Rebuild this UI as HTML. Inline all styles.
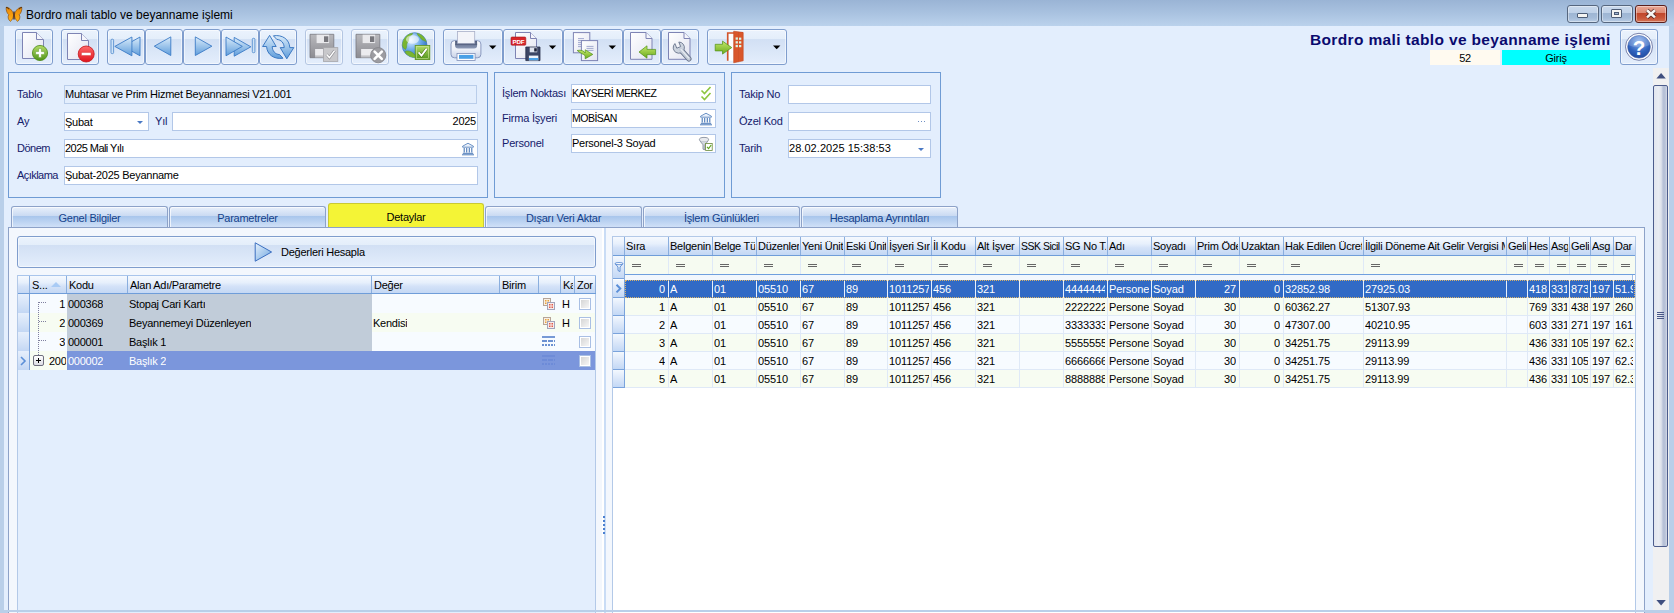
<!DOCTYPE html><html lang="tr"><head><meta charset="utf-8"><title>Bordro mali tablo ve beyanname işlemi</title><style>
*{box-sizing:border-box;margin:0;padding:0}
html,body{width:1674px;height:613px;overflow:hidden}
body{position:relative;background:#b9cfe9;font-family:"Liberation Sans",sans-serif;font-size:11px;letter-spacing:-.25px;color:#000;line-height:1}
.abs,.abs *{position:absolute}
.abs{position:absolute}
.t{position:absolute;white-space:nowrap;line-height:13px;height:13px}
#titlebar{left:0;top:0;width:1674px;height:26px;background:linear-gradient(#9ab4d5,#a9c2e0 50%,#bbd2ec)}
#content{left:4px;top:26px;width:1665px;height:584px;background:#e3eefd;overflow:hidden}
.tb{position:absolute;top:29px;height:36px;border:1px solid #7f9dcd;border-radius:3px;background:linear-gradient(#ebf3fd 0,#e4eefa 27%,#d2e0f4 28%,#dbe7f8 65%,#e4eefc 100%);box-shadow:inset 0 0 0 1px rgba(255,255,255,.55)}
.tb.dis{border-color:#b4c6e2}
.tb svg{position:absolute;left:0;top:0}
.panel{position:absolute;border:1px solid #6f9bd4;background:#e3eefd}
.lbl{position:absolute;white-space:nowrap;color:#15206b;line-height:13px;letter-spacing:-.2px}
.inp{position:absolute;height:19px;border:1px solid #b2c7e8;background:#fff;white-space:nowrap;overflow:hidden}
.inp span{position:absolute;left:0;top:2px;line-height:13px}
.inp.ro{background:#e3eefd;border-color:#b9cdea}
.tab{position:absolute;top:206px;height:21px;width:157px;border:1px solid #8da2c8;border-bottom:none;border-radius:3px 3px 0 0;background:linear-gradient(#e9f0fb 0,#c9daf2 45%,#a9c6ec 47%,#cfe0f7 100%);color:#15428b;text-align:center;line-height:22px;box-shadow:inset 1px 1px 0 rgba(255,255,255,.7)}
.tab.act{top:203px;height:24px;background:#f4f436;border-color:#c9c934;color:#000;line-height:27px;box-shadow:none}
.hdr{position:absolute;background:linear-gradient(#f6f9fe 0,#e7f0fc 38%,#d4e2f8 60%,#c4d8f4 100%);border-right:1px solid #8aaede;white-space:nowrap;overflow:hidden}
.hdr span{position:absolute;left:3px;line-height:13px}
.uc{font-style:normal;font-size:10.5px;letter-spacing:-.5px;position:static!important}
.cell{position:absolute;white-space:nowrap;overflow:hidden;line-height:13px}
</style></head><body>
<div id="titlebar" class="abs">
<svg style="position:absolute;left:5px;top:6px" width="18" height="17" viewBox="0 0 18 17"><defs><linearGradient id="gBf" x1="0" y1="0" x2="0" y2="1"><stop offset="0" stop-color="#e8870a"/><stop offset=".6" stop-color="#f8a010"/><stop offset="1" stop-color="#ffb21c"/></linearGradient></defs><path d="M8.500 8.200C7.200 3.600 3.600 1 1.200 1.300C.9 4.400 2 7.400 3.800 8.700C2.500 10.400 3 13.800 5.400 15.400C7.200 14.200 8.200 11.800 8.500 9.800Z" fill="url(#gBf)" stroke="#7a4208" stroke-width=".6"/><path d="M9.500 8.200C10.800 3.600 14.400 1 16.800 1.300C17.100 4.400 16 7.400 14.200 8.700C15.500 10.400 15 13.800 12.600 15.400C10.800 14.200 9.800 11.800 9.500 9.800Z" fill="url(#gBf)" stroke="#7a4208" stroke-width=".6"/><path d="M1.200 1.300C2.400 1.600 3.400 2.400 4.200 3.400M16.800 1.300C15.600 1.600 14.600 2.400 13.800 3.400" stroke="#4a2a08" stroke-width="1" fill="none"/><rect x="8.300" y="5.200" width="1.400" height="8.600" rx=".7" fill="#4e2a12"/></svg>
<div class="t" style="left:26px;top:8px;font-size:12px;line-height:15px;height:15px;letter-spacing:0">Bordro mali tablo ve beyanname işlemi</div>
<div class="abs" style="left:1567px;top:5px;width:32px;height:18px;border:1px solid #56677f;border-radius:3px;background:linear-gradient(#c9d9ec 0,#bfd1e8 42%,#9db5d3 44%,#a5bcd9 75%,#b9cde5 100%);box-shadow:inset 0 0 0 1px rgba(255,255,255,.4)"><div style="left:9px;top:7px;width:11px;height:5px;background:#f4f4f2;border:1px solid #4d5c75;border-radius:1px"></div></div>
<div class="abs" style="left:1601px;top:5px;width:32px;height:18px;border:1px solid #56677f;border-radius:3px;background:linear-gradient(#c9d9ec 0,#bfd1e8 42%,#9db5d3 44%,#a5bcd9 75%,#b9cde5 100%);box-shadow:inset 0 0 0 1px rgba(255,255,255,.4)"><div style="left:9px;top:3px;width:11px;height:9px;background:#f4f4f2;border:1px solid #4d5c75;border-radius:1px"></div><div style="left:12px;top:6px;width:5px;height:3px;background:#9fb4d2;border:1px solid #4d5c75"></div></div>
<div class="abs" style="left:1635px;top:5px;width:32px;height:18px;border:1px solid #5a1f1c;border-radius:3px;background:linear-gradient(#eaa795 0,#dd8a74 42%,#c0452a 44%,#c9573a 75%,#d67456 100%);box-shadow:inset 0 0 0 1px rgba(255,255,255,.4)"><svg style="left:0;top:0" width="30" height="16" viewBox="0 0 30 16"><path d="M11 4.200l8 7.200M19 4.200l-8 7.200" stroke="#5a2a25" stroke-width="4.200"/><path d="M11 4.200l8 7.200M19 4.200l-8 7.200" stroke="#f6f6f4" stroke-width="2.600"/></svg></div>
</div>
<div id="content" class="abs"></div>
<div class="tb" style="left:15px;width:38px"></div>
<div class="tb" style="left:61px;width:38px"></div>
<div class="tb" style="left:107px;width:38px"></div>
<div class="tb" style="left:145px;width:38px"></div>
<div class="tb" style="left:183px;width:38px"></div>
<div class="tb" style="left:221px;width:38px"></div>
<div class="tb" style="left:259px;width:38px"></div>
<div class="tb dis" style="left:305px;width:38px"></div>
<div class="tb dis" style="left:351px;width:38px"></div>
<div class="tb" style="left:397px;width:38px"></div>
<div class="tb" style="left:443px;width:60px"></div>
<div class="tb" style="left:503px;width:60px"></div>
<div class="tb" style="left:563px;width:60px"></div>
<div class="tb" style="left:623px;width:38px"></div>
<div class="tb" style="left:661px;width:38px"></div>
<div class="tb" style="left:707px;width:80px"></div>
<div class="tb" style="left:1620px;width:38px"></div>
<svg class="abs" style="left:0;top:26px" width="1674" height="44" viewBox="0 26 1674 44"><defs>
<linearGradient id="gPage" x1="0" y1="0" x2="1" y2="1"><stop offset="0" stop-color="#ffffff"/><stop offset="1" stop-color="#e2e4f1"/></linearGradient>
<linearGradient id="gBlue" x1="0" y1="0" x2="0" y2="1"><stop offset="0" stop-color="#d9ebfa"/><stop offset="1" stop-color="#5f9ddb"/></linearGradient>
<linearGradient id="gGreen" x1="0" y1="0" x2="0" y2="1"><stop offset="0" stop-color="#b5dc68"/><stop offset="1" stop-color="#4f9418"/></linearGradient>
<linearGradient id="gRed" x1="0" y1="0" x2="0" y2="1"><stop offset="0" stop-color="#ff6a6a"/><stop offset="1" stop-color="#e0121c"/></linearGradient>
<linearGradient id="gGray" x1="0" y1="0" x2="0" y2="1"><stop offset="0" stop-color="#b9b9bd"/><stop offset="1" stop-color="#8c8c92"/></linearGradient>
<linearGradient id="gArr" x1="0" y1="0" x2="0" y2="1"><stop offset="0" stop-color="#c4e86a"/><stop offset="1" stop-color="#6aaa1c"/></linearGradient>
<radialGradient id="gGlobe" cx=".35" cy=".3" r=".8"><stop offset="0" stop-color="#e8f4ff"/><stop offset=".5" stop-color="#6aa9e8"/><stop offset="1" stop-color="#1f5fb8"/></radialGradient>
<radialGradient id="gHelp" cx=".5" cy=".25" r=".9"><stop offset="0" stop-color="#8fb4ee"/><stop offset=".55" stop-color="#2f62bd"/><stop offset="1" stop-color="#1a3f8f"/></radialGradient>
<linearGradient id="gPr" x1="0" y1="0" x2="0" y2="1"><stop offset="0" stop-color="#fafbfe"/><stop offset=".5" stop-color="#eef1f9"/><stop offset="1" stop-color="#c9d3e8"/></linearGradient><linearGradient id="gPrB" x1="0" y1="0" x2="0" y2="1"><stop offset="0" stop-color="#4f5b79"/><stop offset="1" stop-color="#8e9bb8"/></linearGradient>
</defs><path d="M22.5 32.5H36.5L43.5 39.5V58.5H22.5Z" fill="url(#gPage)" stroke="#7e84b4" stroke-width="1"/><path d="M36.5 32.5V39.5H43.5" fill="#f4f5fb" stroke="#7e84b4" stroke-width="1"/><circle cx="40" cy="53" r="7.6" fill="url(#gGreen)" stroke="#4b8a18" stroke-width=".8"/><path d="M38.6 48.6h2.8v3h3v2.8h-3v3h-2.8v-3h-3v-2.8h3z" fill="#fff" stroke="#5b9a22" stroke-width=".5"/><path d="M67.5 33.5H81.5L88.5 40.5V59.5H67.5Z" fill="url(#gPage)" stroke="#7e84b4" stroke-width="1"/><path d="M81.5 33.5V40.5H88.5" fill="#f4f5fb" stroke="#7e84b4" stroke-width="1"/><circle cx="86.2" cy="54" r="8" fill="url(#gRed)" stroke="#c4161c" stroke-width=".8"/><rect x="81.4" y="52.4" width="9.6" height="3.2" rx=".6" fill="#fff" stroke="#d43a3a" stroke-width=".5"/><rect x="111" y="39.2" width="2.6" height="14.4" rx="1" fill="#cfe3f7" stroke="#4a86cc" stroke-width=".8"/><path d="M123.3 46.4L140.0 37.0V55.8Z" fill="url(#gBlue)" stroke="#3b7ac6" stroke-width=".9" stroke-linejoin="round"/><path d="M114.8 46.4L131.9 37.0V55.8Z" fill="url(#gBlue)" stroke="#3b7ac6" stroke-width=".9" stroke-linejoin="round"/><path d="M154.3 46.2L170.8 36.9V55.5Z" fill="url(#gBlue)" stroke="#3b7ac6" stroke-width=".9" stroke-linejoin="round"/><path d="M211.9 46.2L195.3 36.9V55.5Z" fill="url(#gBlue)" stroke="#3b7ac6" stroke-width=".9" stroke-linejoin="round"/><path d="M250.9 46.8L234.2 37.4V56.2Z" fill="url(#gBlue)" stroke="#3b7ac6" stroke-width=".9" stroke-linejoin="round"/><path d="M242.3 46.4L226.0 37.0V55.8Z" fill="url(#gBlue)" stroke="#3b7ac6" stroke-width=".9" stroke-linejoin="round"/><rect x="252.3" y="38.3" width="2.6" height="14.4" rx="1" fill="#cfe3f7" stroke="#4a86cc" stroke-width=".8"/><g fill="url(#gBlue)" stroke="#2f6fbd" stroke-width=".9" stroke-linejoin="round"><path d="M262.6 46.5 L269.6 35.4 L276.2 46.5 H272.2 C272.4 51 275 54.2 279.6 54.6 L283 58.2 C274 59.6 267 54.6 266.6 46.5Z"/><path d="M293.8 47.6 L286.8 58.8 L280.2 47.6 H284.2 C284 43 281.4 39.8 276.8 39.4 L273.4 35.8 C282.4 34.4 289.4 39.4 289.8 47.6Z"/></g><path d="M310.0 34.3H333.8V57.7H310.0Z" fill="url(#gGray)" stroke="#77777d" stroke-width=".8"/><rect x="316.6" y="34.7" width="12.5" height="8.4" fill="#e9e9ec"/><rect x="324.0" y="36.3" width="4.3" height="5.7" fill="#77777d"/><rect x="315.1" y="49.0" width="15.7" height="8.4" fill="#ececef"/><rect x="315.1" y="55.4" width="15.7" height="2.1" fill="#77777d" opacity=".35"/><rect x="323.400" y="47.600" width="14.400" height="13.800" fill="#c8c8cb" stroke="#a6a6aa" stroke-width=".8"/><path d="M326.600 54.400l2.800 3.200 5.200-7" fill="none" stroke="#8e8e93" stroke-width="2.600"/><path d="M326.600 54.400l2.800 3.200 5.200-7" fill="none" stroke="#fff" stroke-width="1.500"/><path d="M356.0 34.3H379.8V57.7H356.0Z" fill="url(#gGray)" stroke="#77777d" stroke-width=".8"/><rect x="362.6" y="34.7" width="12.5" height="8.4" fill="#e9e9ec"/><rect x="370.0" y="36.3" width="4.3" height="5.7" fill="#77777d"/><rect x="361.1" y="49.0" width="15.7" height="8.4" fill="#ececef"/><rect x="361.1" y="55.4" width="15.7" height="2.1" fill="#77777d" opacity=".35"/><circle cx="378.2" cy="55.2" r="7.6" fill="#9c9ca1" stroke="#818187" stroke-width=".8"/><path d="M374.6 51.6l7.2 7.2M381.8 51.6l-7.2 7.2" stroke="#fff" stroke-width="2.6" stroke-linecap="round"/><clipPath id="cpG"><circle cx="414.600" cy="45.100" r="12.300"/></clipPath><circle cx="414.600" cy="45.100" r="12.400" fill="url(#gGlobe)" stroke="#4a7fc4" stroke-width=".8"/><g clip-path="url(#cpG)" fill="#79b530" stroke="#5f9a22" stroke-width=".5"><path d="M401 40C402.500 36 407 32.500 412 32C413.500 33.500 411.500 35.500 409.500 36.500C408 38 409.500 40.500 407.500 42.500C406 44.500 407.500 47 405.500 49.500C402.500 48 400.500 43 401 40Z"/><path d="M417.500 32C422 32 427 36 428.500 42C426 42.500 424.500 40 422.500 40C420.500 39 420.500 37 418.500 36C417.500 34.500 416.500 33 417.500 32Z"/><path d="M405 51.500C408 50 411.500 51.500 413.500 53.500C415 55.500 418 56.500 417 58.500C411 59.500 406 56 405 51.500Z"/></g><ellipse cx="412.500" cy="39.500" rx="6.500" ry="4.200" fill="#fff" opacity=".55"/><rect x="415.200" y="45.400" width="14.600" height="14.200" fill="url(#gGreen)" stroke="#5f9420" stroke-width=".8"/><rect x="416.500" y="46.700" width="12" height="11.600" fill="none" stroke="#cfe89a" stroke-width=".6"/><path d="M418.600 52.400l2.900 3.200 5.200-7" fill="none" stroke="#4d7a16" stroke-width="3"/><path d="M418.600 52.400l2.900 3.200 5.200-7" fill="none" stroke="#fff" stroke-width="1.800"/><rect x="451" y="40.600" width="29.900" height="17.200" rx="3.500" fill="url(#gPr)" stroke="#7f8fb8" stroke-width=".9"/><path d="M455.100 41h22v4.500a3 3 0 0 1-3 3h-16a3 3 0 0 1-3-3z" fill="url(#gPrB)"/><rect x="457.500" y="31.400" width="17.200" height="12.400" fill="#f3f4f9" stroke="#a9afc8" stroke-width=".8"/><path d="M455.100 44.200h22" stroke="#4f5b79" stroke-width="1"/><rect x="457" y="53.400" width="18.100" height="7" fill="#fdfdff" stroke="#7f8fb8" stroke-width=".8"/><rect x="459" y="54.900" width="14.400" height="3.900" fill="#4aa0e6"/><path d="M489.0 45.4H496.4L492.7 49.2Z" fill="#000"/><path d="M515.5 32.5H530.5L536.5 38.5V58.5H515.5Z" fill="url(#gPage)" stroke="#7e84b4" stroke-width="1"/><path d="M530.5 32.5V38.5H536.5" fill="#f4f5fb" stroke="#7e84b4" stroke-width="1"/><rect x="511" y="37" width="14.800" height="8.200" rx="1" fill="#d8262c" stroke="#a3151a" stroke-width=".6"/><text x="518.400" y="43.700" font-family="Liberation Sans,sans-serif" font-weight="bold" font-size="6.200" fill="#fff" text-anchor="middle">PDF</text><path d="M525.8 47.0H540.0V60.6H525.8Z" fill="#3c4564" stroke="#2a314c" stroke-width=".8"/><rect x="529.7" y="47.4" width="7.5" height="4.9" fill="#dfe3ee"/><rect x="534.2" y="48.2" width="2.6" height="3.3" fill="#1d2238"/><rect x="528.9" y="55.6" width="9.4" height="4.9" fill="#eef3fb"/><rect x="528.9" y="59.2" width="9.4" height="1.2" fill="#2a314c" opacity=".35"/><rect x="529" y="58" width="9.200" height="2.200" fill="#4aa0e6"/><path d="M548.9 45.4H556.2L552.5 49.2Z" fill="#000"/><rect x="573.400" y="32.600" width="16.400" height="20.200" fill="url(#gPage)" stroke="#7e84b4"/><path d="M578 38.600h6M578 40.600h6M578 42.600h6M578 44.600h6M578 46.600h3" stroke="#8d97c4" stroke-width=".8"/><rect x="581.400" y="40.600" width="16.200" height="20" fill="url(#gPage)" stroke="#7e84b4"/><path d="M586.500 46.400h7M586.500 48.400h7M586.500 50.400h7" stroke="#8d97c4" stroke-width=".8"/><path d="M577.200 50.500c4-1 7 .5 8 2.500v-3.200l7.600 4.600-7.600 4.400v-3c-2-2-5-2.400-8-5.300z" fill="url(#gArr)" stroke="#4f8f14" stroke-width=".7" stroke-linejoin="round"/><path d="M608.6 45.4H616.0L612.3 49.2Z" fill="#000"/><path d="M630.5 32.5H646.0L652.0 38.5V59.3H630.5Z" fill="url(#gPage)" stroke="#7e84b4" stroke-width="1"/><path d="M646.0 32.5V38.5H652.0" fill="#f4f5fb" stroke="#7e84b4" stroke-width="1"/><path d="M639 52l8-6.200v3.600h8.600v5.200h-8.600v3.600z" fill="url(#gArr)" stroke="#4f8f14" stroke-width=".7" stroke-linejoin="round"/><path d="M668.5 32.5H684.0L690.0 38.5V59.3H668.5Z" fill="url(#gPage)" stroke="#7e84b4" stroke-width="1"/><path d="M684.0 32.5V38.5H690.0" fill="#f4f5fb" stroke="#7e84b4" stroke-width="1"/><path d="M681.500 50.600L688.800 58.800" stroke="#66728a" stroke-width="5.400" stroke-linecap="round"/><path d="M678.80 42.00A5.6 5.6 0 1 1 674.91 43.57L676.78 48.20L680.67 46.63Z" fill="#cdd4df" stroke="#66728a" stroke-width=".9" stroke-linejoin="round"/><path d="M680.500 49.500L688.800 58.800" stroke="#c3cbd8" stroke-width="3.600" stroke-linecap="round"/><path d="M681 49.300L688.600 57.800" stroke="#e9edf3" stroke-width="1.200" stroke-linecap="round"/><path d="M727.700 60.800V33h15.300" fill="none" stroke="#d4552a" stroke-width="1.600"/><path d="M729 34h4.700v26.800H729z" fill="#fdfdfd"/><path d="M733.700 31.200L743.200 32.500V60.800L733.700 62.800Z" fill="#d9562a" stroke="#c2461f" stroke-width=".6" stroke-linejoin="round"/><path d="M738.500 31.900V62" stroke="#c94e26" stroke-width=".5"/><g fill="#d9f5e6"><rect x="735.600" y="37.400" width="2.300" height="2.300"/><rect x="739" y="37.600" width="2.300" height="2.200"/><rect x="735.600" y="41.200" width="2.300" height="2.300"/><rect x="739" y="41.300" width="2.300" height="2.200"/><rect x="735.600" y="44.900" width="2.300" height="2.300"/><rect x="739" y="45" width="2.300" height="2.200"/></g><path d="M715.200 44.300h7.300v-3.200l9.300 6.500-9.300 6.500v-3.200h-7.300z" fill="url(#gArr)" stroke="#4f8f14" stroke-width=".7" stroke-linejoin="round"/><path d="M773.0 45.4H780.4L776.7 49.2Z" fill="#000"/><circle cx="1639" cy="46.800" r="13.500" fill="#fbfcfe" stroke="#5a6496" stroke-width=".8"/><circle cx="1639" cy="46.800" r="11.300" fill="url(#gHelp)" stroke="#3a5aa6" stroke-width=".6"/><path d="M1628.200 45a10.800 10.800 0 0 1 21.600 0a16 9 0 0 1-21.600 0z" fill="#fff" opacity=".18"/><text x="1639" y="54.600" font-family="Liberation Sans,sans-serif" font-weight="bold" font-size="20.500" fill="#fff" text-anchor="middle">?</text></svg>
<div class="t" style="left:1310px;top:31px;width:300px;text-align:right;font-weight:bold;font-size:15.5px;letter-spacing:.35px;line-height:18px;height:18px;color:#0a0a6e" id="heading">Bordro mali tablo ve beyanname işlemi</div>
<div class="abs" style="left:1430px;top:50px;width:70px;height:15px;background:#fffaf0;text-align:center;line-height:17px" id="b52">52</div>
<div class="abs" style="left:1502px;top:50px;width:108px;height:15px;background:#00ffff;text-align:center;line-height:17px">Giriş</div>
<div class="panel" style="left:8px;top:72px;width:480px;height:126px"></div>
<div class="panel" style="left:494px;top:72px;width:231px;height:126px"></div>
<div class="panel" style="left:731px;top:72px;width:210px;height:126px"></div>
<div class="lbl" style="left:17px;top:88px">Tablo</div>
<div class="inp ro" style="left:64px;top:85px;width:413px"><span>Muhtasar ve Prim Hizmet Beyannamesi V21.001</span></div>
<div class="lbl" style="left:17px;top:115px">Ay</div>
<div class="inp " style="left:64px;top:112px;width:85px"><span><i style="font-style:normal;position:relative;top:1px">Şubat</i></span><svg style="position:absolute;left:72px;top:8px" width="6" height="3"><path d="M0 0h6l-3 3z" fill="#4a79c4"/></svg></div>
<div class="lbl" style="left:155px;top:115px">Yıl</div>
<div class="inp " style="left:172px;top:112px;width:306px"><span style="left:auto;right:1px">2025</span></div>
<div class="lbl" style="left:17px;top:142px"><i style="font-style:normal;letter-spacing:-.5px">Dönem</i></div>
<div class="inp " style="left:64px;top:139px;width:414px"><span><i style="font-style:normal;letter-spacing:-.55px">2025 Mali Yılı</i></span><svg style="position:absolute;right:2px;top:2px" width="14" height="14" viewBox="0 0 14 14"><path d="M7 1.200L1.600 4.200v1h10.800v-1z" fill="#e9f0fa" stroke="#4a79b8" stroke-width=".8" stroke-linejoin="round"/><path d="M3.200 6v4.600M5.700 6v4.600M8.300 6v4.600M10.800 6v4.600" stroke="#4a79b8" stroke-width="1.100"/><path d="M1.800 11.300h10.400M1 12.800h12" stroke="#4a79b8" stroke-width="1"/></svg></div>
<div class="lbl" style="left:17px;top:169px"><i style="font-style:normal;letter-spacing:-.55px">Açıklama</i></div>
<div class="inp " style="left:64px;top:166px;width:414px"><span>Şubat-2025 Beyanname</span></div>
<div class="lbl" style="left:502px;top:87px">İşlem Noktası</div>
<div class="inp " style="left:571px;top:84px;width:145px"><span><i class="uc">KAYSERİ MERKEZ</i></span><svg style="position:absolute;right:2px;top:1px" width="14" height="16" viewBox="0 0 14 16"><path d="M2.500 4.500l3 3 6-6.500" fill="none" stroke="#8cc63f" stroke-width="1.600"/><path d="M2.500 10.500l3 3 6-6.500" fill="none" stroke="#8cc63f" stroke-width="1.600"/></svg></div>
<div class="lbl" style="left:502px;top:112px">Firma İşyeri</div>
<div class="inp " style="left:571px;top:109px;width:145px"><span><i class="uc">MOBİSAN</i></span><svg style="position:absolute;right:2px;top:2px" width="14" height="14" viewBox="0 0 14 14"><path d="M7 1.200L1.600 4.200v1h10.800v-1z" fill="#e9f0fa" stroke="#4a79b8" stroke-width=".8" stroke-linejoin="round"/><path d="M3.200 6v4.600M5.700 6v4.600M8.300 6v4.600M10.800 6v4.600" stroke="#4a79b8" stroke-width="1.100"/><path d="M1.800 11.300h10.400M1 12.800h12" stroke="#4a79b8" stroke-width="1"/></svg></div>
<div class="lbl" style="left:502px;top:137px">Personel</div>
<div class="inp " style="left:571px;top:134px;width:145px"><span>Personel-3 Soyad</span><svg style="position:absolute;right:2px;top:1px" width="15" height="16" viewBox="0 0 15 16"><ellipse cx="6" cy="3.600" rx="4.600" ry="2.200" fill="#e8eaee" stroke="#7b8494" stroke-width=".8"/><path d="M2.200 5.200l2.800 3.600v4.400l2 .6v-5l2.800-3.600" fill="#d4d8df" stroke="#7b8494" stroke-width=".8"/><rect x="7.600" y="7.400" width="6.600" height="7" fill="#fff" stroke="#6a8a3a" stroke-width=".8"/><path d="M9 10.800l1.600 1.800 2.600-3.600" fill="none" stroke="#5fa61e" stroke-width="1.200"/></svg></div>
<div class="lbl" style="left:739px;top:88px">Takip No</div>
<div class="inp " style="left:788px;top:85px;width:143px"></div>
<div class="lbl" style="left:739px;top:115px">Özel Kod</div>
<div class="inp " style="left:788px;top:112px;width:143px"><div style="position:absolute;right:5px;top:8px;width:7px;height:1px;background:repeating-linear-gradient(90deg,#6f8fc4 0 1px,transparent 1px 3px)"></div></div>
<div class="lbl" style="left:739px;top:142px">Tarih</div>
<div class="inp " style="left:788px;top:139px;width:143px"><span><i style="font-style:normal;letter-spacing:.05px">28.02.2025 15:38:53</i></span><svg style="position:absolute;right:6px;top:8px" width="6" height="3"><path d="M0 0h6l-3 3z" fill="#4a79c4"/></svg></div>
<div class="abs" style="left:1653px;top:68px;width:16px;height:542px;background:#f0f0f1"></div>
<svg class="abs" style="left:1653px;top:68px" width="16" height="542"><path d="M3.400 10.400h9.400l-4.700-5.400z" fill="#3f4f7f"/><path d="M3.400 532h9.400l-4.700 5.400z" fill="#3f4f7f"/></svg>
<div class="abs" style="left:1653px;top:85px;width:15px;height:462px;border:1px solid #4c5c8c;border-radius:2px;background:linear-gradient(90deg,#e2e6ef 0,#e9ecf3 35%,#dfe3ec 55%,#b7c1d7 70%,#b7c1d7 85%,#d5dbe8 100%)"></div>
<div class="abs" style="left:1657px;top:312px;width:7px;height:7px;background:repeating-linear-gradient(#4a5888 0 1px,transparent 1px 2px)"></div>
<div class="abs" style="left:8px;top:227px;width:1637px;height:390px;background:#f3f7fd;border:1px solid #8da2c8"></div>
<div class="tab" style="left:11px">Genel Bilgiler</div>
<div class="tab" style="left:169px">Parametreler</div>
<div class="tab act" style="left:328px;width:156px">Detaylar</div>
<div class="tab" style="left:485px">Dışarı Veri Aktar</div>
<div class="tab" style="left:643px">İşlem Günlükleri</div>
<div class="tab" style="left:801px">Hesaplama Ayrıntıları</div>
<div class="abs" style="left:17px;top:236px;width:579px;height:32px;border:1px solid #7f9dcd;border-radius:3px;background:linear-gradient(#ebf3fd 0,#e4eefa 27%,#d2e0f4 28%,#dbe7f8 65%,#e4eefc 100%);box-shadow:inset 0 0 0 1px rgba(255,255,255,.55)"></div>
<svg class="abs" style="left:254px;top:242px" width="20" height="20" viewBox="0 0 20 20"><defs><linearGradient id="gPl" x1="0" y1="0" x2="1" y2="1"><stop offset="0" stop-color="#e6f1fc"/><stop offset="1" stop-color="#6ea6e0"/></linearGradient></defs><path d="M1.200 .800L17.600 10L1.200 19.200Z" fill="url(#gPl)" stroke="#3b6fc0" stroke-width="1" stroke-linejoin="round"/></svg>
<div class="t" style="left:281px;top:246px" id="dh">Değerleri Hesapla</div>
<div class="abs" style="left:17px;top:275px;width:579px;height:340px;background:#e3eefd;border:1px solid #b3c9e8"></div>
<div class="abs" style="left:18px;top:275px;width:578px;height:19px;border-bottom:1px solid #6f9dd9;border-top:1px solid #a9c5ec;overflow:hidden">
<div class="hdr" style="left:0px;top:0;width:12px;height:17px"><span style="top:3px;left:2px;width:8px;overflow:hidden"></span></div>
<div class="hdr" style="left:12px;top:0;width:37px;height:17px"><span style="top:3px;left:2px;width:33px;overflow:hidden">S...</span></div>
<div class="hdr" style="left:49px;top:0;width:61px;height:17px"><span style="top:3px;left:2px;width:57px;overflow:hidden">Kodu</span></div>
<div class="hdr" style="left:110px;top:0;width:244px;height:17px"><span style="top:3px;left:2px;width:240px;overflow:hidden">Alan Adı/Parametre</span></div>
<div class="hdr" style="left:354px;top:0;width:128px;height:17px"><span style="top:3px;left:2px;width:124px;overflow:hidden">Değer</span></div>
<div class="hdr" style="left:482px;top:0;width:39px;height:17px"><span style="top:3px;left:2px;width:35px;overflow:hidden">Birim</span></div>
<div class="hdr" style="left:521px;top:0;width:22px;height:17px"><span style="top:3px;left:2px;width:18px;overflow:hidden"></span></div>
<div class="hdr" style="left:543px;top:0;width:14px;height:17px"><span style="top:3px;left:2px;width:10px;overflow:hidden">Ka</span></div>
<div class="hdr" style="left:557px;top:0;width:21px;height:17px"><span style="top:3px;left:2px;width:17px;overflow:hidden">Zor</span></div>
<svg style="position:absolute;left:33px;top:6px" width="10" height="5"><path d="M0 5L5 0L10 5Z" fill="#a9cbf5"/></svg>
</div>
<div class="abs" style="left:18px;top:294px;width:11px;height:19px;background:linear-gradient(#e6effc,#d6e4f8 50%,#c3d7f4)"></div>
<div class="abs" style="left:29px;top:294px;width:1px;height:19px;background:#7aa3dc"></div>
<div class="abs" style="left:30px;top:294px;width:37px;height:19px;background:#f7fbff"></div>
<div class="abs" style="left:67px;top:294px;width:305px;height:19px;background:#c1ccd9"></div>
<div class="abs" style="left:372px;top:294px;width:223px;height:19px;background:#f7fbff"></div>
<div class="cell" style="left:30px;top:298px;width:35px;text-align:right">1</div>
<div class="cell" style="left:68px;top:298px;color:#000">000368</div>
<div class="cell" style="left:129px;top:298px;color:#000">Stopaj Cari Kartı</div>
<svg style="position:absolute;left:543px;top:298px" width="12" height="12" viewBox="0 0 12 12"><rect x=".500" y=".500" width="7" height="7" fill="#f8efe4" stroke="#b5a498" stroke-width="1"/><rect x="4.500" y="4.500" width="7" height="7" fill="#f7ecea" stroke="#a3a3bb" stroke-width="1"/><path d="M2 2h1.500v1.500H2zM4.500 2H6v1.500H4.500zM2 4.500h1.500V6H2z" fill="#e8a23c"/><path d="M6 6h1.500v1.500H6zM8.500 6H10v1.500H8.500zM6 8.500h1.500V10H6zM8.500 8.500H10V10H8.500z" fill="#e0584a"/></svg>
<div class="cell" style="left:562px;top:298px">H</div>
<div class="abs" style="left:579px;top:298px;width:12px;height:12px;border:1px solid #a9bfe4;background:#fff"><div style="position:absolute;left:1px;top:1px;width:8px;height:8px;background:linear-gradient(135deg,#d6d6d6,#f6f6f6)"></div></div>
<div class="abs" style="left:18px;top:313px;width:11px;height:19px;background:linear-gradient(#e6effc,#d6e4f8 50%,#c3d7f4)"></div>
<div class="abs" style="left:29px;top:313px;width:1px;height:19px;background:#7aa3dc"></div>
<div class="abs" style="left:30px;top:313px;width:37px;height:19px;background:#f7fcf2"></div>
<div class="abs" style="left:67px;top:313px;width:305px;height:19px;background:#c1ccd9"></div>
<div class="abs" style="left:372px;top:313px;width:223px;height:19px;background:#f7fcf2"></div>
<div class="cell" style="left:30px;top:317px;width:35px;text-align:right">2</div>
<div class="cell" style="left:68px;top:317px;color:#000">000369</div>
<div class="cell" style="left:129px;top:317px;color:#000">Beyannemeyi Düzenleyen</div>
<div class="cell" style="left:373px;top:317px">Kendisi</div>
<svg style="position:absolute;left:543px;top:317px" width="12" height="12" viewBox="0 0 12 12"><rect x=".500" y=".500" width="7" height="7" fill="#f8efe4" stroke="#b5a498" stroke-width="1"/><rect x="4.500" y="4.500" width="7" height="7" fill="#f7ecea" stroke="#a3a3bb" stroke-width="1"/><path d="M2 2h1.500v1.500H2zM4.500 2H6v1.500H4.500zM2 4.500h1.500V6H2z" fill="#e8a23c"/><path d="M6 6h1.500v1.500H6zM8.500 6H10v1.500H8.500zM6 8.500h1.500V10H6zM8.500 8.500H10V10H8.500z" fill="#e0584a"/></svg>
<div class="cell" style="left:562px;top:317px">H</div>
<div class="abs" style="left:579px;top:317px;width:12px;height:12px;border:1px solid #a9bfe4;background:#fff"><div style="position:absolute;left:1px;top:1px;width:8px;height:8px;background:linear-gradient(135deg,#d6d6d6,#f6f6f6)"></div></div>
<div class="abs" style="left:18px;top:332px;width:11px;height:19px;background:linear-gradient(#e6effc,#d6e4f8 50%,#c3d7f4)"></div>
<div class="abs" style="left:29px;top:332px;width:1px;height:19px;background:#7aa3dc"></div>
<div class="abs" style="left:30px;top:332px;width:37px;height:19px;background:#f7fbff"></div>
<div class="abs" style="left:67px;top:332px;width:305px;height:19px;background:#c1ccd9"></div>
<div class="abs" style="left:372px;top:332px;width:223px;height:19px;background:#f7fbff"></div>
<div class="cell" style="left:30px;top:336px;width:35px;text-align:right">3</div>
<div class="cell" style="left:68px;top:336px;color:#000">000001</div>
<div class="cell" style="left:129px;top:336px;color:#000">Başlık 1</div>
<svg style="position:absolute;left:542px;top:336px" width="13" height="10" viewBox="0 0 13 10"><path d="M0 1h13" stroke="#3f6fc4" stroke-width="1.400"/><path d="M0 5h13" stroke="#3f6fc4" stroke-width="1.400" stroke-dasharray="5 1"/><path d="M0 9h13" stroke="#3f6fc4" stroke-width="1.400" stroke-dasharray="2 1"/></svg>
<div class="abs" style="left:579px;top:336px;width:12px;height:12px;border:1px solid #a9bfe4;background:#fff"><div style="position:absolute;left:1px;top:1px;width:8px;height:8px;background:linear-gradient(135deg,#d6d6d6,#f6f6f6)"></div></div>
<div class="abs" style="left:18px;top:351px;width:11px;height:19px;background:linear-gradient(#e6effc,#d6e4f8 50%,#c3d7f4)"></div>
<div class="abs" style="left:29px;top:351px;width:1px;height:19px;background:#7aa3dc"></div>
<div class="abs" style="left:30px;top:351px;width:37px;height:19px;background:#f7fcf2"></div>
<div class="abs" style="left:67px;top:351px;width:528px;height:19px;background:#7b96dc"></div>
<div class="cell" style="left:49px;top:355px;width:17px">200</div>
<div class="cell" style="left:68px;top:355px;color:#fff">000002</div>
<div class="cell" style="left:129px;top:355px;color:#fff">Başlık 2</div>
<svg style="position:absolute;left:542px;top:355px" width="13" height="10" viewBox="0 0 13 10"><path d="M0 1h13" stroke="#6a88d6" stroke-width="1.400"/><path d="M0 5h13" stroke="#6a88d6" stroke-width="1.400" stroke-dasharray="5 1"/><path d="M0 9h13" stroke="#6a88d6" stroke-width="1.400" stroke-dasharray="2 1"/></svg>
<div class="abs" style="left:579px;top:355px;width:12px;height:12px;border:1px solid #a9bfe4;background:#fff"><div style="position:absolute;left:1px;top:1px;width:8px;height:8px;background:linear-gradient(135deg,#d6d6d6,#f6f6f6)"></div></div>
<svg class="abs" style="left:30px;top:294px" width="40" height="76"><g stroke="#7f7f9f" stroke-width="1" stroke-dasharray="1 1"><path d="M8.500 8v58"/><path d="M9 8.500h8"/><path d="M9 27.500h8"/><path d="M9 46.500h8"/></g></svg>
<div class="abs" style="left:33px;top:355px;width:11px;height:11px;border:1px solid #6f6f7f;border-radius:2px;background:linear-gradient(#fff,#dcdce4)"><div style="position:absolute;left:2px;top:4px;width:5px;height:1px;background:#000"></div><div style="position:absolute;left:4px;top:2px;width:1px;height:5px;background:#000"></div></div>
<svg class="abs" style="left:20px;top:356px" width="7" height="10"><path d="M1 1l4 4-4 4" fill="none" stroke="#5b8fd8" stroke-width="1.600"/></svg>
<div class="abs" style="left:602px;top:228px;width:4px;height:385px;background:linear-gradient(90deg,#fff 0,#fff 62%,#c9dcf5 62%)"></div>
<div class="abs" style="left:603px;top:516px;width:2px;height:19px;background:repeating-linear-gradient(#4a7fd0 0 2px,transparent 2px 4px)"></div>
<div class="abs" style="left:612px;top:236px;width:1024px;height:380px;background:#fff;border:1px solid #b3c9e8"></div>
<div class="abs" style="left:613px;top:237px;width:1022px;height:19px;border-bottom:1px solid #6f9dd9;overflow:hidden">
<div class="hdr" style="left:0px;top:0;width:12px;height:18px"><span style="top:3px;left:1px;width:9px;overflow:hidden"></span></div>
<div class="hdr" style="left:12px;top:0;width:44px;height:18px"><span style="top:3px;left:1px;width:41px;overflow:hidden">Sıra</span></div>
<div class="hdr" style="left:56px;top:0;width:44px;height:18px"><span style="top:3px;left:1px;width:41px;overflow:hidden">Belgenin</span></div>
<div class="hdr" style="left:100px;top:0;width:44px;height:18px"><span style="top:3px;left:1px;width:41px;overflow:hidden">Belge Tü</span></div>
<div class="hdr" style="left:144px;top:0;width:44px;height:18px"><span style="top:3px;left:1px;width:41px;overflow:hidden">Düzenler</span></div>
<div class="hdr" style="left:188px;top:0;width:44px;height:18px"><span style="top:3px;left:1px;width:41px;overflow:hidden">Yeni Ünit</span></div>
<div class="hdr" style="left:232px;top:0;width:43px;height:18px"><span style="top:3px;left:1px;width:40px;overflow:hidden">Eski Ünit</span></div>
<div class="hdr" style="left:275px;top:0;width:44px;height:18px"><span style="top:3px;left:1px;width:41px;overflow:hidden">İşyeri Sır</span></div>
<div class="hdr" style="left:319px;top:0;width:44px;height:18px"><span style="top:3px;left:1px;width:41px;overflow:hidden">İl Kodu</span></div>
<div class="hdr" style="left:363px;top:0;width:44px;height:18px"><span style="top:3px;left:1px;width:41px;overflow:hidden">Alt İşver</span></div>
<div class="hdr" style="left:407px;top:0;width:44px;height:18px"><span style="top:3px;left:1px;width:41px;overflow:hidden"><i class="uc">SSK Sicil</i></span></div>
<div class="hdr" style="left:451px;top:0;width:44px;height:18px"><span style="top:3px;left:1px;width:41px;overflow:hidden">SG No T.</span></div>
<div class="hdr" style="left:495px;top:0;width:44px;height:18px"><span style="top:3px;left:1px;width:41px;overflow:hidden">Adı</span></div>
<div class="hdr" style="left:539px;top:0;width:44px;height:18px"><span style="top:3px;left:1px;width:41px;overflow:hidden">Soyadı</span></div>
<div class="hdr" style="left:583px;top:0;width:44px;height:18px"><span style="top:3px;left:1px;width:41px;overflow:hidden">Prim Öde</span></div>
<div class="hdr" style="left:627px;top:0;width:44px;height:18px"><span style="top:3px;left:1px;width:41px;overflow:hidden">Uzaktan</span></div>
<div class="hdr" style="left:671px;top:0;width:80px;height:18px"><span style="top:3px;left:1px;width:77px;overflow:hidden">Hak Edilen Ücret</span></div>
<div class="hdr" style="left:751px;top:0;width:143px;height:18px"><span style="top:3px;left:1px;width:140px;overflow:hidden">İlgili Döneme Ait Gelir Vergisi M</span></div>
<div class="hdr" style="left:894px;top:0;width:21px;height:18px"><span style="top:3px;left:1px;width:18px;overflow:hidden">Geli</span></div>
<div class="hdr" style="left:915px;top:0;width:22px;height:18px"><span style="top:3px;left:1px;width:19px;overflow:hidden">Hes</span></div>
<div class="hdr" style="left:937px;top:0;width:20px;height:18px"><span style="top:3px;left:1px;width:17px;overflow:hidden">Asg</span></div>
<div class="hdr" style="left:957px;top:0;width:21px;height:18px"><span style="top:3px;left:1px;width:18px;overflow:hidden">Geli</span></div>
<div class="hdr" style="left:978px;top:0;width:23px;height:18px"><span style="top:3px;left:1px;width:20px;overflow:hidden">Asg</span></div>
<div class="hdr" style="left:1001px;top:0;width:22px;height:18px"><span style="top:3px;left:1px;width:19px;overflow:hidden">Dar</span></div>
</div>
<div class="abs" style="left:625px;top:256px;width:1010px;height:18px;background:#f6fbf1"></div>
<div class="abs" style="left:613px;top:256px;width:11px;height:23px;background:linear-gradient(#f3f8fe,#dbe7f9 50%,#c3d8f5);border-bottom:1px solid #7aa3dc"></div><div class="abs" style="left:624px;top:256px;width:1px;height:24px;background:#8aaede"></div>
<svg class="abs" style="left:614px;top:262px" width="10" height="11" viewBox="0 0 10 11"><path d="M1 1.500h8l-3 3.500v4.500l-2-1v-3.500z" fill="#eaf2fc" stroke="#4f83cf" stroke-width=".9" stroke-linejoin="round"/><ellipse cx="5" cy="1.600" rx="4" ry="1.100" fill="#fff" stroke="#4f83cf" stroke-width=".8"/></svg>
<div class="abs" style="left:632px;top:264px;width:9px;height:1px;background:#666"></div><div class="abs" style="left:632px;top:266px;width:9px;height:1px;background:#666"></div>
<div class="abs" style="left:676px;top:264px;width:9px;height:1px;background:#666"></div><div class="abs" style="left:676px;top:266px;width:9px;height:1px;background:#666"></div>
<div class="abs" style="left:668px;top:256px;width:1px;height:18px;background:#dfe9f7"></div>
<div class="abs" style="left:720px;top:264px;width:9px;height:1px;background:#666"></div><div class="abs" style="left:720px;top:266px;width:9px;height:1px;background:#666"></div>
<div class="abs" style="left:712px;top:256px;width:1px;height:18px;background:#dfe9f7"></div>
<div class="abs" style="left:764px;top:264px;width:9px;height:1px;background:#666"></div><div class="abs" style="left:764px;top:266px;width:9px;height:1px;background:#666"></div>
<div class="abs" style="left:756px;top:256px;width:1px;height:18px;background:#dfe9f7"></div>
<div class="abs" style="left:808px;top:264px;width:9px;height:1px;background:#666"></div><div class="abs" style="left:808px;top:266px;width:9px;height:1px;background:#666"></div>
<div class="abs" style="left:800px;top:256px;width:1px;height:18px;background:#dfe9f7"></div>
<div class="abs" style="left:852px;top:264px;width:9px;height:1px;background:#666"></div><div class="abs" style="left:852px;top:266px;width:9px;height:1px;background:#666"></div>
<div class="abs" style="left:844px;top:256px;width:1px;height:18px;background:#dfe9f7"></div>
<div class="abs" style="left:895px;top:264px;width:9px;height:1px;background:#666"></div><div class="abs" style="left:895px;top:266px;width:9px;height:1px;background:#666"></div>
<div class="abs" style="left:887px;top:256px;width:1px;height:18px;background:#dfe9f7"></div>
<div class="abs" style="left:939px;top:264px;width:9px;height:1px;background:#666"></div><div class="abs" style="left:939px;top:266px;width:9px;height:1px;background:#666"></div>
<div class="abs" style="left:931px;top:256px;width:1px;height:18px;background:#dfe9f7"></div>
<div class="abs" style="left:983px;top:264px;width:9px;height:1px;background:#666"></div><div class="abs" style="left:983px;top:266px;width:9px;height:1px;background:#666"></div>
<div class="abs" style="left:975px;top:256px;width:1px;height:18px;background:#dfe9f7"></div>
<div class="abs" style="left:1027px;top:264px;width:9px;height:1px;background:#666"></div><div class="abs" style="left:1027px;top:266px;width:9px;height:1px;background:#666"></div>
<div class="abs" style="left:1019px;top:256px;width:1px;height:18px;background:#dfe9f7"></div>
<div class="abs" style="left:1071px;top:264px;width:9px;height:1px;background:#666"></div><div class="abs" style="left:1071px;top:266px;width:9px;height:1px;background:#666"></div>
<div class="abs" style="left:1063px;top:256px;width:1px;height:18px;background:#dfe9f7"></div>
<div class="abs" style="left:1115px;top:264px;width:9px;height:1px;background:#666"></div><div class="abs" style="left:1115px;top:266px;width:9px;height:1px;background:#666"></div>
<div class="abs" style="left:1107px;top:256px;width:1px;height:18px;background:#dfe9f7"></div>
<div class="abs" style="left:1159px;top:264px;width:9px;height:1px;background:#666"></div><div class="abs" style="left:1159px;top:266px;width:9px;height:1px;background:#666"></div>
<div class="abs" style="left:1151px;top:256px;width:1px;height:18px;background:#dfe9f7"></div>
<div class="abs" style="left:1203px;top:264px;width:9px;height:1px;background:#666"></div><div class="abs" style="left:1203px;top:266px;width:9px;height:1px;background:#666"></div>
<div class="abs" style="left:1195px;top:256px;width:1px;height:18px;background:#dfe9f7"></div>
<div class="abs" style="left:1247px;top:264px;width:9px;height:1px;background:#666"></div><div class="abs" style="left:1247px;top:266px;width:9px;height:1px;background:#666"></div>
<div class="abs" style="left:1239px;top:256px;width:1px;height:18px;background:#dfe9f7"></div>
<div class="abs" style="left:1291px;top:264px;width:9px;height:1px;background:#666"></div><div class="abs" style="left:1291px;top:266px;width:9px;height:1px;background:#666"></div>
<div class="abs" style="left:1283px;top:256px;width:1px;height:18px;background:#dfe9f7"></div>
<div class="abs" style="left:1371px;top:264px;width:9px;height:1px;background:#666"></div><div class="abs" style="left:1371px;top:266px;width:9px;height:1px;background:#666"></div>
<div class="abs" style="left:1363px;top:256px;width:1px;height:18px;background:#dfe9f7"></div>
<div class="abs" style="left:1514px;top:264px;width:9px;height:1px;background:#666"></div><div class="abs" style="left:1514px;top:266px;width:9px;height:1px;background:#666"></div>
<div class="abs" style="left:1506px;top:256px;width:1px;height:18px;background:#dfe9f7"></div>
<div class="abs" style="left:1535px;top:264px;width:9px;height:1px;background:#666"></div><div class="abs" style="left:1535px;top:266px;width:9px;height:1px;background:#666"></div>
<div class="abs" style="left:1527px;top:256px;width:1px;height:18px;background:#dfe9f7"></div>
<div class="abs" style="left:1557px;top:264px;width:9px;height:1px;background:#666"></div><div class="abs" style="left:1557px;top:266px;width:9px;height:1px;background:#666"></div>
<div class="abs" style="left:1549px;top:256px;width:1px;height:18px;background:#dfe9f7"></div>
<div class="abs" style="left:1577px;top:264px;width:9px;height:1px;background:#666"></div><div class="abs" style="left:1577px;top:266px;width:9px;height:1px;background:#666"></div>
<div class="abs" style="left:1569px;top:256px;width:1px;height:18px;background:#dfe9f7"></div>
<div class="abs" style="left:1598px;top:264px;width:9px;height:1px;background:#666"></div><div class="abs" style="left:1598px;top:266px;width:9px;height:1px;background:#666"></div>
<div class="abs" style="left:1590px;top:256px;width:1px;height:18px;background:#dfe9f7"></div>
<div class="abs" style="left:1621px;top:264px;width:9px;height:1px;background:#666"></div><div class="abs" style="left:1621px;top:266px;width:9px;height:1px;background:#666"></div>
<div class="abs" style="left:1613px;top:256px;width:1px;height:18px;background:#dfe9f7"></div>
<div class="abs" style="left:625px;top:274px;width:1010px;height:1px;background:#6f9fde"></div>
<div class="abs" style="left:625px;top:275px;width:1008px;height:5px;background:#f2f7fd;border-right:1px solid #9fbce6"></div>
<div class="abs" style="left:613px;top:280px;width:11px;height:18px;background:linear-gradient(#f3f8fe,#dbe7f9 50%,#c3d8f5);border-bottom:1px solid #7aa3dc"></div>
<div class="abs" style="left:624px;top:280px;width:1px;height:18px;background:#7aa3dc"></div>
<div class="abs" style="left:625px;top:280px;width:1010px;height:18px;background:#316ac5;border-bottom:1px solid #316ac5"></div>
<div class="cell" style="left:626px;top:283px;width:39px;letter-spacing:-.1px;text-align:right;color:#fff">0</div>
<div class="abs" style="left:668px;top:280px;width:1px;height:18px;background:#e8f0fb"></div>
<div class="cell" style="left:670px;top:283px;width:40px;letter-spacing:-.1px;color:#fff">A</div>
<div class="abs" style="left:712px;top:280px;width:1px;height:18px;background:#e8f0fb"></div>
<div class="cell" style="left:714px;top:283px;width:40px;letter-spacing:-.1px;color:#fff">01</div>
<div class="abs" style="left:756px;top:280px;width:1px;height:18px;background:#e8f0fb"></div>
<div class="cell" style="left:758px;top:283px;width:40px;letter-spacing:-.1px;color:#fff">05510</div>
<div class="abs" style="left:800px;top:280px;width:1px;height:18px;background:#e8f0fb"></div>
<div class="cell" style="left:802px;top:283px;width:40px;letter-spacing:-.1px;color:#fff">67</div>
<div class="abs" style="left:844px;top:280px;width:1px;height:18px;background:#e8f0fb"></div>
<div class="cell" style="left:846px;top:283px;width:39px;letter-spacing:-.1px;color:#fff">89</div>
<div class="abs" style="left:887px;top:280px;width:1px;height:18px;background:#e8f0fb"></div>
<div class="cell" style="left:889px;top:283px;width:40px;letter-spacing:-.1px;color:#fff">1011257</div>
<div class="abs" style="left:931px;top:280px;width:1px;height:18px;background:#e8f0fb"></div>
<div class="cell" style="left:933px;top:283px;width:40px;letter-spacing:-.1px;color:#fff">456</div>
<div class="abs" style="left:975px;top:280px;width:1px;height:18px;background:#e8f0fb"></div>
<div class="cell" style="left:977px;top:283px;width:40px;letter-spacing:-.1px;color:#fff">321</div>
<div class="abs" style="left:1019px;top:280px;width:1px;height:18px;background:#e8f0fb"></div>
<div class="abs" style="left:1063px;top:280px;width:1px;height:18px;background:#e8f0fb"></div>
<div class="cell" style="left:1065px;top:283px;width:40px;letter-spacing:-.1px;color:#fff">4444444</div>
<div class="abs" style="left:1107px;top:280px;width:1px;height:18px;background:#e8f0fb"></div>
<div class="cell" style="left:1109px;top:283px;width:40px;letter-spacing:-.1px;color:#fff">Persone</div>
<div class="abs" style="left:1151px;top:280px;width:1px;height:18px;background:#e8f0fb"></div>
<div class="cell" style="left:1153px;top:283px;width:40px;letter-spacing:-.1px;color:#fff">Soyad</div>
<div class="abs" style="left:1195px;top:280px;width:1px;height:18px;background:#e8f0fb"></div>
<div class="cell" style="left:1197px;top:283px;width:39px;letter-spacing:-.1px;text-align:right;color:#fff">27</div>
<div class="abs" style="left:1239px;top:280px;width:1px;height:18px;background:#e8f0fb"></div>
<div class="cell" style="left:1241px;top:283px;width:39px;letter-spacing:-.1px;text-align:right;color:#fff">0</div>
<div class="abs" style="left:1283px;top:280px;width:1px;height:18px;background:#e8f0fb"></div>
<div class="cell" style="left:1285px;top:283px;width:76px;letter-spacing:-.1px;color:#fff">32852.98</div>
<div class="abs" style="left:1363px;top:280px;width:1px;height:18px;background:#e8f0fb"></div>
<div class="cell" style="left:1365px;top:283px;width:139px;letter-spacing:-.1px;color:#fff">27925.03</div>
<div class="abs" style="left:1506px;top:280px;width:1px;height:18px;background:#e8f0fb"></div>
<div class="abs" style="left:1527px;top:280px;width:1px;height:18px;background:#e8f0fb"></div>
<div class="cell" style="left:1529px;top:283px;width:18px;letter-spacing:-.1px;color:#fff">418</div>
<div class="abs" style="left:1549px;top:280px;width:1px;height:18px;background:#e8f0fb"></div>
<div class="cell" style="left:1551px;top:283px;width:16px;letter-spacing:-.1px;color:#fff">331</div>
<div class="abs" style="left:1569px;top:280px;width:1px;height:18px;background:#e8f0fb"></div>
<div class="cell" style="left:1571px;top:283px;width:17px;letter-spacing:-.1px;color:#fff">873</div>
<div class="abs" style="left:1590px;top:280px;width:1px;height:18px;background:#e8f0fb"></div>
<div class="cell" style="left:1592px;top:283px;width:19px;letter-spacing:-.1px;color:#fff">197</div>
<div class="abs" style="left:1613px;top:280px;width:1px;height:18px;background:#e8f0fb"></div>
<div class="cell" style="left:1615px;top:283px;width:18px;letter-spacing:-.1px;color:#fff">51.9</div>
<div class="abs" style="left:625px;top:280px;width:1010px;height:18px;border:1px dotted #d9b36a"></div>
<div class="abs" style="left:613px;top:298px;width:11px;height:18px;background:linear-gradient(#f3f8fe,#dbe7f9 50%,#c3d8f5);border-bottom:1px solid #7aa3dc"></div>
<div class="abs" style="left:624px;top:298px;width:1px;height:18px;background:#7aa3dc"></div>
<div class="abs" style="left:625px;top:298px;width:1010px;height:18px;background:#f7fcf2;border-bottom:1px solid #dfe9f7"></div>
<div class="cell" style="left:626px;top:301px;width:39px;letter-spacing:-.1px;text-align:right;color:#000">1</div>
<div class="abs" style="left:668px;top:298px;width:1px;height:18px;background:#dfe9f7"></div>
<div class="cell" style="left:670px;top:301px;width:40px;letter-spacing:-.1px;color:#000">A</div>
<div class="abs" style="left:712px;top:298px;width:1px;height:18px;background:#dfe9f7"></div>
<div class="cell" style="left:714px;top:301px;width:40px;letter-spacing:-.1px;color:#000">01</div>
<div class="abs" style="left:756px;top:298px;width:1px;height:18px;background:#dfe9f7"></div>
<div class="cell" style="left:758px;top:301px;width:40px;letter-spacing:-.1px;color:#000">05510</div>
<div class="abs" style="left:800px;top:298px;width:1px;height:18px;background:#dfe9f7"></div>
<div class="cell" style="left:802px;top:301px;width:40px;letter-spacing:-.1px;color:#000">67</div>
<div class="abs" style="left:844px;top:298px;width:1px;height:18px;background:#dfe9f7"></div>
<div class="cell" style="left:846px;top:301px;width:39px;letter-spacing:-.1px;color:#000">89</div>
<div class="abs" style="left:887px;top:298px;width:1px;height:18px;background:#dfe9f7"></div>
<div class="cell" style="left:889px;top:301px;width:40px;letter-spacing:-.1px;color:#000">1011257</div>
<div class="abs" style="left:931px;top:298px;width:1px;height:18px;background:#dfe9f7"></div>
<div class="cell" style="left:933px;top:301px;width:40px;letter-spacing:-.1px;color:#000">456</div>
<div class="abs" style="left:975px;top:298px;width:1px;height:18px;background:#dfe9f7"></div>
<div class="cell" style="left:977px;top:301px;width:40px;letter-spacing:-.1px;color:#000">321</div>
<div class="abs" style="left:1019px;top:298px;width:1px;height:18px;background:#dfe9f7"></div>
<div class="abs" style="left:1063px;top:298px;width:1px;height:18px;background:#dfe9f7"></div>
<div class="cell" style="left:1065px;top:301px;width:40px;letter-spacing:-.1px;color:#000">2222222</div>
<div class="abs" style="left:1107px;top:298px;width:1px;height:18px;background:#dfe9f7"></div>
<div class="cell" style="left:1109px;top:301px;width:40px;letter-spacing:-.1px;color:#000">Persone</div>
<div class="abs" style="left:1151px;top:298px;width:1px;height:18px;background:#dfe9f7"></div>
<div class="cell" style="left:1153px;top:301px;width:40px;letter-spacing:-.1px;color:#000">Soyad</div>
<div class="abs" style="left:1195px;top:298px;width:1px;height:18px;background:#dfe9f7"></div>
<div class="cell" style="left:1197px;top:301px;width:39px;letter-spacing:-.1px;text-align:right;color:#000">30</div>
<div class="abs" style="left:1239px;top:298px;width:1px;height:18px;background:#dfe9f7"></div>
<div class="cell" style="left:1241px;top:301px;width:39px;letter-spacing:-.1px;text-align:right;color:#000">0</div>
<div class="abs" style="left:1283px;top:298px;width:1px;height:18px;background:#dfe9f7"></div>
<div class="cell" style="left:1285px;top:301px;width:76px;letter-spacing:-.1px;color:#000">60362.27</div>
<div class="abs" style="left:1363px;top:298px;width:1px;height:18px;background:#dfe9f7"></div>
<div class="cell" style="left:1365px;top:301px;width:139px;letter-spacing:-.1px;color:#000">51307.93</div>
<div class="abs" style="left:1506px;top:298px;width:1px;height:18px;background:#dfe9f7"></div>
<div class="abs" style="left:1527px;top:298px;width:1px;height:18px;background:#dfe9f7"></div>
<div class="cell" style="left:1529px;top:301px;width:18px;letter-spacing:-.1px;color:#000">769</div>
<div class="abs" style="left:1549px;top:298px;width:1px;height:18px;background:#dfe9f7"></div>
<div class="cell" style="left:1551px;top:301px;width:16px;letter-spacing:-.1px;color:#000">331</div>
<div class="abs" style="left:1569px;top:298px;width:1px;height:18px;background:#dfe9f7"></div>
<div class="cell" style="left:1571px;top:301px;width:17px;letter-spacing:-.1px;color:#000">438</div>
<div class="abs" style="left:1590px;top:298px;width:1px;height:18px;background:#dfe9f7"></div>
<div class="cell" style="left:1592px;top:301px;width:19px;letter-spacing:-.1px;color:#000">197</div>
<div class="abs" style="left:1613px;top:298px;width:1px;height:18px;background:#dfe9f7"></div>
<div class="cell" style="left:1615px;top:301px;width:18px;letter-spacing:-.1px;color:#000">260</div>
<div class="abs" style="left:613px;top:316px;width:11px;height:18px;background:linear-gradient(#f3f8fe,#dbe7f9 50%,#c3d8f5);border-bottom:1px solid #7aa3dc"></div>
<div class="abs" style="left:624px;top:316px;width:1px;height:18px;background:#7aa3dc"></div>
<div class="abs" style="left:625px;top:316px;width:1010px;height:18px;background:#f7fbff;border-bottom:1px solid #dfe9f7"></div>
<div class="cell" style="left:626px;top:319px;width:39px;letter-spacing:-.1px;text-align:right;color:#000">2</div>
<div class="abs" style="left:668px;top:316px;width:1px;height:18px;background:#dfe9f7"></div>
<div class="cell" style="left:670px;top:319px;width:40px;letter-spacing:-.1px;color:#000">A</div>
<div class="abs" style="left:712px;top:316px;width:1px;height:18px;background:#dfe9f7"></div>
<div class="cell" style="left:714px;top:319px;width:40px;letter-spacing:-.1px;color:#000">01</div>
<div class="abs" style="left:756px;top:316px;width:1px;height:18px;background:#dfe9f7"></div>
<div class="cell" style="left:758px;top:319px;width:40px;letter-spacing:-.1px;color:#000">05510</div>
<div class="abs" style="left:800px;top:316px;width:1px;height:18px;background:#dfe9f7"></div>
<div class="cell" style="left:802px;top:319px;width:40px;letter-spacing:-.1px;color:#000">67</div>
<div class="abs" style="left:844px;top:316px;width:1px;height:18px;background:#dfe9f7"></div>
<div class="cell" style="left:846px;top:319px;width:39px;letter-spacing:-.1px;color:#000">89</div>
<div class="abs" style="left:887px;top:316px;width:1px;height:18px;background:#dfe9f7"></div>
<div class="cell" style="left:889px;top:319px;width:40px;letter-spacing:-.1px;color:#000">1011257</div>
<div class="abs" style="left:931px;top:316px;width:1px;height:18px;background:#dfe9f7"></div>
<div class="cell" style="left:933px;top:319px;width:40px;letter-spacing:-.1px;color:#000">456</div>
<div class="abs" style="left:975px;top:316px;width:1px;height:18px;background:#dfe9f7"></div>
<div class="cell" style="left:977px;top:319px;width:40px;letter-spacing:-.1px;color:#000">321</div>
<div class="abs" style="left:1019px;top:316px;width:1px;height:18px;background:#dfe9f7"></div>
<div class="abs" style="left:1063px;top:316px;width:1px;height:18px;background:#dfe9f7"></div>
<div class="cell" style="left:1065px;top:319px;width:40px;letter-spacing:-.1px;color:#000">3333333</div>
<div class="abs" style="left:1107px;top:316px;width:1px;height:18px;background:#dfe9f7"></div>
<div class="cell" style="left:1109px;top:319px;width:40px;letter-spacing:-.1px;color:#000">Persone</div>
<div class="abs" style="left:1151px;top:316px;width:1px;height:18px;background:#dfe9f7"></div>
<div class="cell" style="left:1153px;top:319px;width:40px;letter-spacing:-.1px;color:#000">Soyad</div>
<div class="abs" style="left:1195px;top:316px;width:1px;height:18px;background:#dfe9f7"></div>
<div class="cell" style="left:1197px;top:319px;width:39px;letter-spacing:-.1px;text-align:right;color:#000">30</div>
<div class="abs" style="left:1239px;top:316px;width:1px;height:18px;background:#dfe9f7"></div>
<div class="cell" style="left:1241px;top:319px;width:39px;letter-spacing:-.1px;text-align:right;color:#000">0</div>
<div class="abs" style="left:1283px;top:316px;width:1px;height:18px;background:#dfe9f7"></div>
<div class="cell" style="left:1285px;top:319px;width:76px;letter-spacing:-.1px;color:#000">47307.00</div>
<div class="abs" style="left:1363px;top:316px;width:1px;height:18px;background:#dfe9f7"></div>
<div class="cell" style="left:1365px;top:319px;width:139px;letter-spacing:-.1px;color:#000">40210.95</div>
<div class="abs" style="left:1506px;top:316px;width:1px;height:18px;background:#dfe9f7"></div>
<div class="abs" style="left:1527px;top:316px;width:1px;height:18px;background:#dfe9f7"></div>
<div class="cell" style="left:1529px;top:319px;width:18px;letter-spacing:-.1px;color:#000">603</div>
<div class="abs" style="left:1549px;top:316px;width:1px;height:18px;background:#dfe9f7"></div>
<div class="cell" style="left:1551px;top:319px;width:16px;letter-spacing:-.1px;color:#000">331</div>
<div class="abs" style="left:1569px;top:316px;width:1px;height:18px;background:#dfe9f7"></div>
<div class="cell" style="left:1571px;top:319px;width:17px;letter-spacing:-.1px;color:#000">271</div>
<div class="abs" style="left:1590px;top:316px;width:1px;height:18px;background:#dfe9f7"></div>
<div class="cell" style="left:1592px;top:319px;width:19px;letter-spacing:-.1px;color:#000">197</div>
<div class="abs" style="left:1613px;top:316px;width:1px;height:18px;background:#dfe9f7"></div>
<div class="cell" style="left:1615px;top:319px;width:18px;letter-spacing:-.1px;color:#000">161</div>
<div class="abs" style="left:613px;top:334px;width:11px;height:18px;background:linear-gradient(#f3f8fe,#dbe7f9 50%,#c3d8f5);border-bottom:1px solid #7aa3dc"></div>
<div class="abs" style="left:624px;top:334px;width:1px;height:18px;background:#7aa3dc"></div>
<div class="abs" style="left:625px;top:334px;width:1010px;height:18px;background:#f7fcf2;border-bottom:1px solid #dfe9f7"></div>
<div class="cell" style="left:626px;top:337px;width:39px;letter-spacing:-.1px;text-align:right;color:#000">3</div>
<div class="abs" style="left:668px;top:334px;width:1px;height:18px;background:#dfe9f7"></div>
<div class="cell" style="left:670px;top:337px;width:40px;letter-spacing:-.1px;color:#000">A</div>
<div class="abs" style="left:712px;top:334px;width:1px;height:18px;background:#dfe9f7"></div>
<div class="cell" style="left:714px;top:337px;width:40px;letter-spacing:-.1px;color:#000">01</div>
<div class="abs" style="left:756px;top:334px;width:1px;height:18px;background:#dfe9f7"></div>
<div class="cell" style="left:758px;top:337px;width:40px;letter-spacing:-.1px;color:#000">05510</div>
<div class="abs" style="left:800px;top:334px;width:1px;height:18px;background:#dfe9f7"></div>
<div class="cell" style="left:802px;top:337px;width:40px;letter-spacing:-.1px;color:#000">67</div>
<div class="abs" style="left:844px;top:334px;width:1px;height:18px;background:#dfe9f7"></div>
<div class="cell" style="left:846px;top:337px;width:39px;letter-spacing:-.1px;color:#000">89</div>
<div class="abs" style="left:887px;top:334px;width:1px;height:18px;background:#dfe9f7"></div>
<div class="cell" style="left:889px;top:337px;width:40px;letter-spacing:-.1px;color:#000">1011257</div>
<div class="abs" style="left:931px;top:334px;width:1px;height:18px;background:#dfe9f7"></div>
<div class="cell" style="left:933px;top:337px;width:40px;letter-spacing:-.1px;color:#000">456</div>
<div class="abs" style="left:975px;top:334px;width:1px;height:18px;background:#dfe9f7"></div>
<div class="cell" style="left:977px;top:337px;width:40px;letter-spacing:-.1px;color:#000">321</div>
<div class="abs" style="left:1019px;top:334px;width:1px;height:18px;background:#dfe9f7"></div>
<div class="abs" style="left:1063px;top:334px;width:1px;height:18px;background:#dfe9f7"></div>
<div class="cell" style="left:1065px;top:337px;width:40px;letter-spacing:-.1px;color:#000">5555555</div>
<div class="abs" style="left:1107px;top:334px;width:1px;height:18px;background:#dfe9f7"></div>
<div class="cell" style="left:1109px;top:337px;width:40px;letter-spacing:-.1px;color:#000">Persone</div>
<div class="abs" style="left:1151px;top:334px;width:1px;height:18px;background:#dfe9f7"></div>
<div class="cell" style="left:1153px;top:337px;width:40px;letter-spacing:-.1px;color:#000">Soyad</div>
<div class="abs" style="left:1195px;top:334px;width:1px;height:18px;background:#dfe9f7"></div>
<div class="cell" style="left:1197px;top:337px;width:39px;letter-spacing:-.1px;text-align:right;color:#000">30</div>
<div class="abs" style="left:1239px;top:334px;width:1px;height:18px;background:#dfe9f7"></div>
<div class="cell" style="left:1241px;top:337px;width:39px;letter-spacing:-.1px;text-align:right;color:#000">0</div>
<div class="abs" style="left:1283px;top:334px;width:1px;height:18px;background:#dfe9f7"></div>
<div class="cell" style="left:1285px;top:337px;width:76px;letter-spacing:-.1px;color:#000">34251.75</div>
<div class="abs" style="left:1363px;top:334px;width:1px;height:18px;background:#dfe9f7"></div>
<div class="cell" style="left:1365px;top:337px;width:139px;letter-spacing:-.1px;color:#000">29113.99</div>
<div class="abs" style="left:1506px;top:334px;width:1px;height:18px;background:#dfe9f7"></div>
<div class="abs" style="left:1527px;top:334px;width:1px;height:18px;background:#dfe9f7"></div>
<div class="cell" style="left:1529px;top:337px;width:18px;letter-spacing:-.1px;color:#000">436</div>
<div class="abs" style="left:1549px;top:334px;width:1px;height:18px;background:#dfe9f7"></div>
<div class="cell" style="left:1551px;top:337px;width:16px;letter-spacing:-.1px;color:#000">331</div>
<div class="abs" style="left:1569px;top:334px;width:1px;height:18px;background:#dfe9f7"></div>
<div class="cell" style="left:1571px;top:337px;width:17px;letter-spacing:-.1px;color:#000">105</div>
<div class="abs" style="left:1590px;top:334px;width:1px;height:18px;background:#dfe9f7"></div>
<div class="cell" style="left:1592px;top:337px;width:19px;letter-spacing:-.1px;color:#000">197</div>
<div class="abs" style="left:1613px;top:334px;width:1px;height:18px;background:#dfe9f7"></div>
<div class="cell" style="left:1615px;top:337px;width:18px;letter-spacing:-.1px;color:#000">62.3</div>
<div class="abs" style="left:613px;top:352px;width:11px;height:18px;background:linear-gradient(#f3f8fe,#dbe7f9 50%,#c3d8f5);border-bottom:1px solid #7aa3dc"></div>
<div class="abs" style="left:624px;top:352px;width:1px;height:18px;background:#7aa3dc"></div>
<div class="abs" style="left:625px;top:352px;width:1010px;height:18px;background:#f7fbff;border-bottom:1px solid #dfe9f7"></div>
<div class="cell" style="left:626px;top:355px;width:39px;letter-spacing:-.1px;text-align:right;color:#000">4</div>
<div class="abs" style="left:668px;top:352px;width:1px;height:18px;background:#dfe9f7"></div>
<div class="cell" style="left:670px;top:355px;width:40px;letter-spacing:-.1px;color:#000">A</div>
<div class="abs" style="left:712px;top:352px;width:1px;height:18px;background:#dfe9f7"></div>
<div class="cell" style="left:714px;top:355px;width:40px;letter-spacing:-.1px;color:#000">01</div>
<div class="abs" style="left:756px;top:352px;width:1px;height:18px;background:#dfe9f7"></div>
<div class="cell" style="left:758px;top:355px;width:40px;letter-spacing:-.1px;color:#000">05510</div>
<div class="abs" style="left:800px;top:352px;width:1px;height:18px;background:#dfe9f7"></div>
<div class="cell" style="left:802px;top:355px;width:40px;letter-spacing:-.1px;color:#000">67</div>
<div class="abs" style="left:844px;top:352px;width:1px;height:18px;background:#dfe9f7"></div>
<div class="cell" style="left:846px;top:355px;width:39px;letter-spacing:-.1px;color:#000">89</div>
<div class="abs" style="left:887px;top:352px;width:1px;height:18px;background:#dfe9f7"></div>
<div class="cell" style="left:889px;top:355px;width:40px;letter-spacing:-.1px;color:#000">1011257</div>
<div class="abs" style="left:931px;top:352px;width:1px;height:18px;background:#dfe9f7"></div>
<div class="cell" style="left:933px;top:355px;width:40px;letter-spacing:-.1px;color:#000">456</div>
<div class="abs" style="left:975px;top:352px;width:1px;height:18px;background:#dfe9f7"></div>
<div class="cell" style="left:977px;top:355px;width:40px;letter-spacing:-.1px;color:#000">321</div>
<div class="abs" style="left:1019px;top:352px;width:1px;height:18px;background:#dfe9f7"></div>
<div class="abs" style="left:1063px;top:352px;width:1px;height:18px;background:#dfe9f7"></div>
<div class="cell" style="left:1065px;top:355px;width:40px;letter-spacing:-.1px;color:#000">6666666</div>
<div class="abs" style="left:1107px;top:352px;width:1px;height:18px;background:#dfe9f7"></div>
<div class="cell" style="left:1109px;top:355px;width:40px;letter-spacing:-.1px;color:#000">Persone</div>
<div class="abs" style="left:1151px;top:352px;width:1px;height:18px;background:#dfe9f7"></div>
<div class="cell" style="left:1153px;top:355px;width:40px;letter-spacing:-.1px;color:#000">Soyad</div>
<div class="abs" style="left:1195px;top:352px;width:1px;height:18px;background:#dfe9f7"></div>
<div class="cell" style="left:1197px;top:355px;width:39px;letter-spacing:-.1px;text-align:right;color:#000">30</div>
<div class="abs" style="left:1239px;top:352px;width:1px;height:18px;background:#dfe9f7"></div>
<div class="cell" style="left:1241px;top:355px;width:39px;letter-spacing:-.1px;text-align:right;color:#000">0</div>
<div class="abs" style="left:1283px;top:352px;width:1px;height:18px;background:#dfe9f7"></div>
<div class="cell" style="left:1285px;top:355px;width:76px;letter-spacing:-.1px;color:#000">34251.75</div>
<div class="abs" style="left:1363px;top:352px;width:1px;height:18px;background:#dfe9f7"></div>
<div class="cell" style="left:1365px;top:355px;width:139px;letter-spacing:-.1px;color:#000">29113.99</div>
<div class="abs" style="left:1506px;top:352px;width:1px;height:18px;background:#dfe9f7"></div>
<div class="abs" style="left:1527px;top:352px;width:1px;height:18px;background:#dfe9f7"></div>
<div class="cell" style="left:1529px;top:355px;width:18px;letter-spacing:-.1px;color:#000">436</div>
<div class="abs" style="left:1549px;top:352px;width:1px;height:18px;background:#dfe9f7"></div>
<div class="cell" style="left:1551px;top:355px;width:16px;letter-spacing:-.1px;color:#000">331</div>
<div class="abs" style="left:1569px;top:352px;width:1px;height:18px;background:#dfe9f7"></div>
<div class="cell" style="left:1571px;top:355px;width:17px;letter-spacing:-.1px;color:#000">105</div>
<div class="abs" style="left:1590px;top:352px;width:1px;height:18px;background:#dfe9f7"></div>
<div class="cell" style="left:1592px;top:355px;width:19px;letter-spacing:-.1px;color:#000">197</div>
<div class="abs" style="left:1613px;top:352px;width:1px;height:18px;background:#dfe9f7"></div>
<div class="cell" style="left:1615px;top:355px;width:18px;letter-spacing:-.1px;color:#000">62.3</div>
<div class="abs" style="left:613px;top:370px;width:11px;height:18px;background:linear-gradient(#f3f8fe,#dbe7f9 50%,#c3d8f5);border-bottom:1px solid #7aa3dc"></div>
<div class="abs" style="left:624px;top:370px;width:1px;height:18px;background:#7aa3dc"></div>
<div class="abs" style="left:625px;top:370px;width:1010px;height:18px;background:#f7fcf2;border-bottom:1px solid #dfe9f7"></div>
<div class="cell" style="left:626px;top:373px;width:39px;letter-spacing:-.1px;text-align:right;color:#000">5</div>
<div class="abs" style="left:668px;top:370px;width:1px;height:18px;background:#dfe9f7"></div>
<div class="cell" style="left:670px;top:373px;width:40px;letter-spacing:-.1px;color:#000">A</div>
<div class="abs" style="left:712px;top:370px;width:1px;height:18px;background:#dfe9f7"></div>
<div class="cell" style="left:714px;top:373px;width:40px;letter-spacing:-.1px;color:#000">01</div>
<div class="abs" style="left:756px;top:370px;width:1px;height:18px;background:#dfe9f7"></div>
<div class="cell" style="left:758px;top:373px;width:40px;letter-spacing:-.1px;color:#000">05510</div>
<div class="abs" style="left:800px;top:370px;width:1px;height:18px;background:#dfe9f7"></div>
<div class="cell" style="left:802px;top:373px;width:40px;letter-spacing:-.1px;color:#000">67</div>
<div class="abs" style="left:844px;top:370px;width:1px;height:18px;background:#dfe9f7"></div>
<div class="cell" style="left:846px;top:373px;width:39px;letter-spacing:-.1px;color:#000">89</div>
<div class="abs" style="left:887px;top:370px;width:1px;height:18px;background:#dfe9f7"></div>
<div class="cell" style="left:889px;top:373px;width:40px;letter-spacing:-.1px;color:#000">1011257</div>
<div class="abs" style="left:931px;top:370px;width:1px;height:18px;background:#dfe9f7"></div>
<div class="cell" style="left:933px;top:373px;width:40px;letter-spacing:-.1px;color:#000">456</div>
<div class="abs" style="left:975px;top:370px;width:1px;height:18px;background:#dfe9f7"></div>
<div class="cell" style="left:977px;top:373px;width:40px;letter-spacing:-.1px;color:#000">321</div>
<div class="abs" style="left:1019px;top:370px;width:1px;height:18px;background:#dfe9f7"></div>
<div class="abs" style="left:1063px;top:370px;width:1px;height:18px;background:#dfe9f7"></div>
<div class="cell" style="left:1065px;top:373px;width:40px;letter-spacing:-.1px;color:#000">8888888</div>
<div class="abs" style="left:1107px;top:370px;width:1px;height:18px;background:#dfe9f7"></div>
<div class="cell" style="left:1109px;top:373px;width:40px;letter-spacing:-.1px;color:#000">Persone</div>
<div class="abs" style="left:1151px;top:370px;width:1px;height:18px;background:#dfe9f7"></div>
<div class="cell" style="left:1153px;top:373px;width:40px;letter-spacing:-.1px;color:#000">Soyad</div>
<div class="abs" style="left:1195px;top:370px;width:1px;height:18px;background:#dfe9f7"></div>
<div class="cell" style="left:1197px;top:373px;width:39px;letter-spacing:-.1px;text-align:right;color:#000">30</div>
<div class="abs" style="left:1239px;top:370px;width:1px;height:18px;background:#dfe9f7"></div>
<div class="cell" style="left:1241px;top:373px;width:39px;letter-spacing:-.1px;text-align:right;color:#000">0</div>
<div class="abs" style="left:1283px;top:370px;width:1px;height:18px;background:#dfe9f7"></div>
<div class="cell" style="left:1285px;top:373px;width:76px;letter-spacing:-.1px;color:#000">34251.75</div>
<div class="abs" style="left:1363px;top:370px;width:1px;height:18px;background:#dfe9f7"></div>
<div class="cell" style="left:1365px;top:373px;width:139px;letter-spacing:-.1px;color:#000">29113.99</div>
<div class="abs" style="left:1506px;top:370px;width:1px;height:18px;background:#dfe9f7"></div>
<div class="abs" style="left:1527px;top:370px;width:1px;height:18px;background:#dfe9f7"></div>
<div class="cell" style="left:1529px;top:373px;width:18px;letter-spacing:-.1px;color:#000">436</div>
<div class="abs" style="left:1549px;top:370px;width:1px;height:18px;background:#dfe9f7"></div>
<div class="cell" style="left:1551px;top:373px;width:16px;letter-spacing:-.1px;color:#000">331</div>
<div class="abs" style="left:1569px;top:370px;width:1px;height:18px;background:#dfe9f7"></div>
<div class="cell" style="left:1571px;top:373px;width:17px;letter-spacing:-.1px;color:#000">105</div>
<div class="abs" style="left:1590px;top:370px;width:1px;height:18px;background:#dfe9f7"></div>
<div class="cell" style="left:1592px;top:373px;width:19px;letter-spacing:-.1px;color:#000">197</div>
<div class="abs" style="left:1613px;top:370px;width:1px;height:18px;background:#dfe9f7"></div>
<div class="cell" style="left:1615px;top:373px;width:18px;letter-spacing:-.1px;color:#000">62.3</div>
<svg class="abs" style="left:615px;top:284px" width="8" height="10"><path d="M1.500 .800l3.800 3.800-3.800 3.800" fill="none" stroke="#5b8fd8" stroke-width="2"/></svg>
<div class="abs" style="left:0;top:610px;width:1674px;height:2px;background:#b9cfe9"></div>
<div class="abs" style="left:0;top:26px;width:4px;height:587px;background:#b9cfe9"></div>
<div class="abs" style="left:1669px;top:26px;width:5px;height:587px;background:#b9cfe9"></div>
</body></html>
